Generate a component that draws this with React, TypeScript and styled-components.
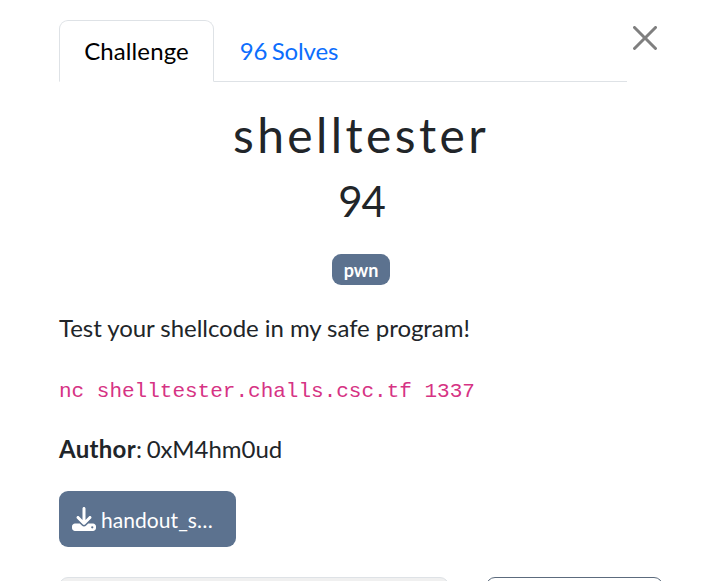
import React from 'react';
import styled, { createGlobalStyle } from 'styled-components';
import { FaDownload } from 'react-icons/fa6';

const GlobalStyle = createGlobalStyle`
  *, *::before, *::after { box-sizing: border-box; }
  html, body { margin: 0; overflow: hidden; background: #fff; }
  body { font-family: Lato, sans-serif; font-size: 24px; line-height: 36px; color: #212529; }
`;

const Dialog = styled.main`
  width: 717px;
  height: 581px;
  overflow: hidden;
  padding: 20px 54px 0 59px;
`;

const Header = styled.header`
  display: flex;
  align-items: flex-start;
`;

const Tabs = styled.nav`
  display: flex;
  width: 568px;
  height: 62px;
  border-bottom: 1px solid #dee2e6;
`;

const Tab = styled.button<{ $active?: boolean }>`
  flex: none;
  width: ${p => (p.$active ? '155px' : '150px')};
  height: 62px;
  padding: 0;
  border: 1px solid;
  border-color: ${p => (p.$active ? '#dee2e6 #dee2e6 #fff' : 'transparent')};
  border-radius: 9px 9px 0 0;
  background: ${p => (p.$active ? '#fff' : 'transparent')};
  color: ${p => (p.$active ? '#000' : '#0d6efd')};
  font: inherit;
  letter-spacing: ${p => (p.$active ? '0.1px' : '-0.15px')};
  word-spacing: -1.5px;
`;

const CloseButton = styled.button`
  display: flex;
  margin: 6px 0 0 6px;
  padding: 0;
  border: 0;
  background: none;
  color: #7f7f7f;
`;

const Title = styled.h1`
  margin: 24px 0 0;
  font-size: 48px;
  font-weight: 400;
  line-height: 58px;
  letter-spacing: 3.4px;
  text-align: center;
`;

const Points = styled.h2`
  margin: 12px 0 0;
  padding-left: 1px;
  font-size: 42px;
  font-weight: 400;
  line-height: 50px;
  letter-spacing: -1px;
  text-align: center;
`;

const Tags = styled.div`
  display: flex;
  justify-content: center;
  margin-top: 28px;
`;

const Tag = styled.span`
  height: 31px;
  padding: 0 12px;
  border-radius: 9px;
  background: #5c728f;
  color: #fff;
  font-size: 18px;
  font-weight: 700;
  line-height: 32px;
`;

const Description = styled.section`
  display: flex;
  flex-direction: column;
  margin-top: 25px;
`;

const Paragraph = styled.p`
  margin: 0;
  letter-spacing: -0.05px;
`;

const Author = styled(Paragraph)`
  letter-spacing: 0;

  strong { letter-spacing: 0.3px; }
  span { letter-spacing: -0.05px; word-spacing: -1.3px; }
`;

const Command = styled.code`
  margin: 27px 0 21px;
  color: #d63384;
  font-family: 'Liberation Mono', monospace;
  font-size: 21px;
  line-height: 37px;
`;

const FileButton = styled.button`
  display: flex;
  align-items: center;
  gap: 5px;
  width: 177px;
  height: 56px;
  margin-top: 24px;
  padding: 0 13px;
  border: 0;
  border-radius: 9px;
  background: #5c728f;
  color: #fff;
  font: 21px/32px Lato, sans-serif;
`;

const FileName = styled.span`
  padding-top: 2px;
  letter-spacing: 0.05px;
`;

const SubmitRow = styled.form`
  display: flex;
  gap: 37px;
  margin-top: 30px;
`;

const FlagInput = styled.input`
  width: 391px;
  height: 57px;
  border: 1px solid #dee2e6;
  border-radius: 9px;
  background: #f0f0f0;
`;

const SubmitButton = styled.button`
  width: 177px;
  height: 57px;
  border: 1px solid #5c6b7d;
  border-radius: 9px;
  background: #fff;
`;

export default function App() {
  return (
    <>
      <GlobalStyle />
      <Dialog>
        <Header>
          <Tabs>
            <Tab $active>Challenge</Tab>
            <Tab>96 Solves</Tab>
          </Tabs>
          <CloseButton aria-label="Close">
            <svg width="24" height="24" viewBox="0 0 16 16" fill="currentColor">
              <path d="M.293.293a1 1 0 0 1 1.414 0L8 6.586 14.293.293a1 1 0 1 1 1.414 1.414L9.414 8l6.293 6.293a1 1 0 0 1-1.414 1.414L8 9.414l-6.293 6.293a1 1 0 0 1-1.414-1.414L6.586 8 .293 1.707a1 1 0 0 1 0-1.414z" />
            </svg>
          </CloseButton>
        </Header>
        <Title>shelltester</Title>
        <Points>94</Points>
        <Tags>
          <Tag>pwn</Tag>
        </Tags>
        <Description>
          <Paragraph>Test your shellcode in my safe program!</Paragraph>
          <Command>nc shelltester.challs.csc.tf 1337</Command>
          <Author>
            <strong>Author</strong><span>: 0xM4hm0ud</span>
          </Author>
        </Description>
        <FileButton>
          <FaDownload size={24} />
          <FileName>handout_s…</FileName>
        </FileButton>
        <SubmitRow>
          <FlagInput aria-label="Flag" />
          <SubmitButton type="button" aria-label="Submit" />
        </SubmitRow>
      </Dialog>
    </>
  );
}
